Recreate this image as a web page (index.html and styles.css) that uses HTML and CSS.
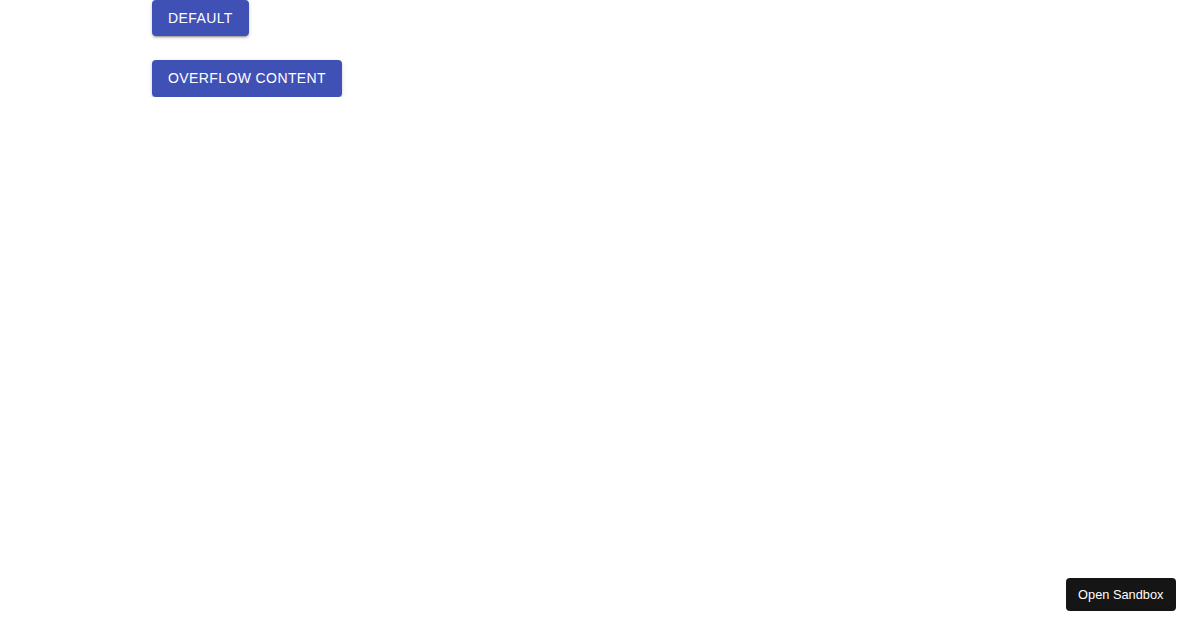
FILE: index.html
```html
<!DOCTYPE html>
<html lang="en">
<head>
<meta charset="utf-8">
<title>Buttons</title>
<link rel="stylesheet" href="styles.css">
</head>
<body>
<main class="demo">
  <button class="mui-btn" type="button">Default</button>
  <button class="mui-btn" type="button">Overflow content</button>
</main>
<a class="sandbox-btn" href="#">Open Sandbox</a>
</body>
</html>
```
FILE: styles.css
```css
html, body {
  margin: 0;
  padding: 0;
  background: #ffffff;
}

.demo {
  display: flex;
  flex-direction: column;
  align-items: flex-start;
  gap: 24px;
  margin-top: -0.5px;
  padding: 0 0 0 152px;
}

.mui-btn {
  box-sizing: border-box;
  display: inline-flex;
  align-items: center;
  justify-content: center;
  min-width: 64px;
  padding: 6px 16px;
  border: 0;
  border-radius: 4px;
  background: #3f51b5;
  color: #ffffff;
  font-family: "Liberation Sans", Arial, sans-serif;
  font-size: 14px;
  font-weight: 400;
  line-height: 1.75;
  letter-spacing: 0.02857em;
  text-transform: uppercase;
  box-shadow: 0 3px 1px -2px rgba(0,0,0,0.2), 0 2px 2px 0 rgba(0,0,0,0.14), 0 1px 5px 0 rgba(0,0,0,0.12);
  cursor: pointer;
}

.sandbox-btn {
  position: fixed;
  right: 24px;
  bottom: 19px;
  box-sizing: border-box;
  height: 33px;
  padding: 0 12.5px;
  display: flex;
  align-items: center;
  background: #151515;
  color: #ffffff;
  border-radius: 4px;
  font-family: "Liberation Sans", Arial, sans-serif;
  font-size: 12.8px;
  text-decoration: none;
}
```
